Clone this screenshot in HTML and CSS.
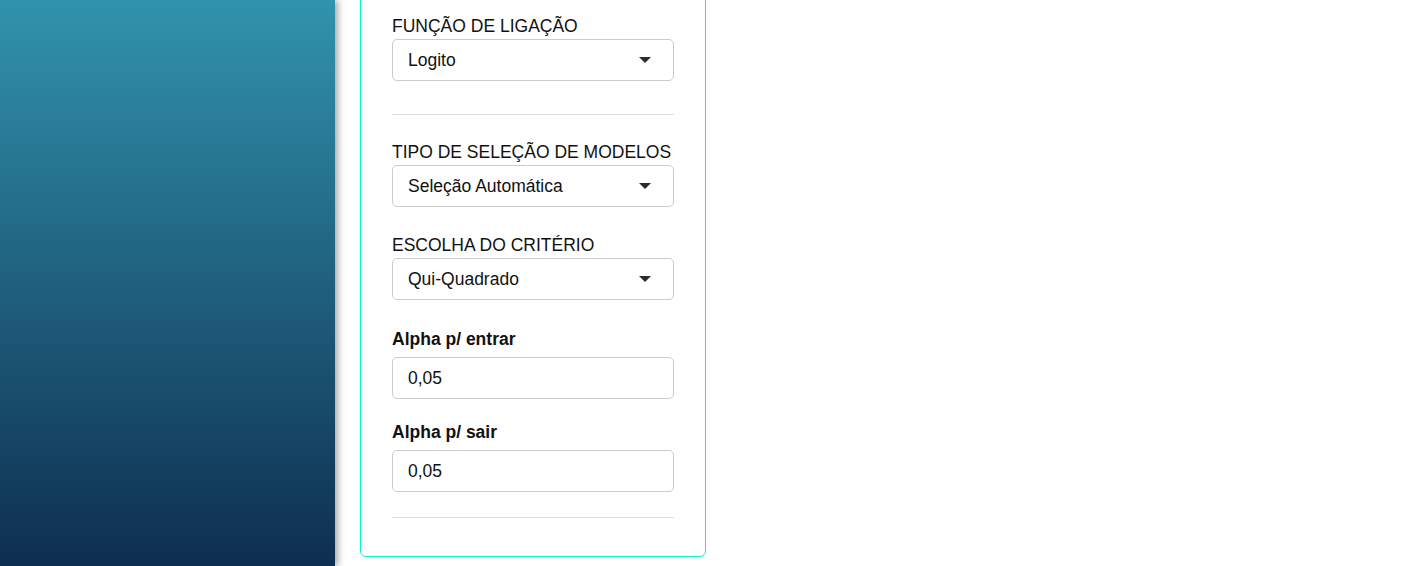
FILE: index.html
```html
<!DOCTYPE html>
<html lang="pt-BR">
<head>
<meta charset="utf-8">
<title>Configuração do modelo</title>
<link rel="stylesheet" href="styles.css">
</head>
<body>
<div class="layout">
  <aside class="sidebar"></aside>
  <main class="main">
    <section class="card">
      <div class="field">
        <label class="label">FUNÇÃO DE LIGAÇÃO</label>
        <div class="select-wrap">
          <select class="control"><option>Logito</option></select>
          <svg class="caret" width="12" height="6" viewBox="0 0 12 6"><path d="M0 0H12L6 6Z" fill="#2b2b2b"/></svg>
        </div>
      </div>
      <hr class="divider divider-top">
      <div class="field field-2">
        <label class="label">TIPO DE SELEÇÃO DE MODELOS</label>
        <div class="select-wrap">
          <select class="control"><option>Seleção Automática</option></select>
          <svg class="caret" width="12" height="6" viewBox="0 0 12 6"><path d="M0 0H12L6 6Z" fill="#2b2b2b"/></svg>
        </div>
      </div>
      <div class="field field-3">
        <label class="label">ESCOLHA DO CRITÉRIO</label>
        <div class="select-wrap">
          <select class="control"><option>Qui-Quadrado</option></select>
          <svg class="caret" width="12" height="6" viewBox="0 0 12 6"><path d="M0 0H12L6 6Z" fill="#2b2b2b"/></svg>
        </div>
      </div>
      <div class="field field-4">
        <label class="label label-bold">Alpha p/ entrar</label>
        <input class="control" type="text" value="0,05">
      </div>
      <div class="field field-5">
        <label class="label label-bold">Alpha p/ sair</label>
        <input class="control" type="text" value="0,05">
      </div>
      <hr class="divider divider-bottom">
    </section>
  </main>
</div>
</body>
</html>
```

FILE: styles.css
```css
* { box-sizing: border-box; }

html, body {
  margin: 0;
  padding: 0;
  height: 100%;
  background: #ffffff;
  overflow: hidden;
}

body {
  font-family: "Liberation Sans", Arial, sans-serif;
  font-size: 17.5px;
  color: #111111;
}

.layout {
  display: flex;
  height: 566px;
}

.sidebar {
  width: 335px;
  flex: 0 0 335px;
  height: 100%;
  background: linear-gradient(to bottom, #3193ad 0%, #0e2e4f 100%);
  box-shadow: 3px 0 7px rgba(0, 0, 0, 0.35);
  position: relative;
  z-index: 1;
}

.main {
  flex: 1;
  padding-left: 25px;
}

.card {
  width: 346px;
  margin-top: -20px;
  padding: 34px 31px 38px;
  border: 1px solid #08f2d3;
  border-radius: 6px;
  background: #ffffff;
}

.field {
  display: flex;
  flex-direction: column;
}

.label {
  display: block;
  font-size: 17.5px;
  line-height: 21px;
  padding-top: 1px;
  margin-bottom: 2px;
  color: #111111;
  white-space: nowrap;
}

.label-bold {
  font-weight: bold;
  margin-bottom: 7px;
}

.select-wrap {
  position: relative;
}

.control {
  display: block;
  width: 100%;
  height: 42px;
  margin: 0;
  padding: 0 15px;
  border: 1px solid #cbcbcb;
  border-radius: 5px;
  background: #ffffff;
  font-family: "Liberation Sans", Arial, sans-serif;
  font-size: 17.5px;
  color: #111111;
  appearance: none;
  -webkit-appearance: none;
  outline: none;
}

.caret {
  position: absolute;
  right: 23px;
  top: 18px;
  pointer-events: none;
}

.divider {
  border: 0;
  border-top: 1px solid #dcdcdc;
  margin: 0;
  height: 0;
}

.divider-top { margin-top: 33px; }
.field-2 { margin-top: 26px; }
.field-3 { margin-top: 27px; }
.field-4 { margin-top: 28px; }
.field-5 { margin-top: 22px; }
.divider-bottom { margin-top: 25px; }
```
